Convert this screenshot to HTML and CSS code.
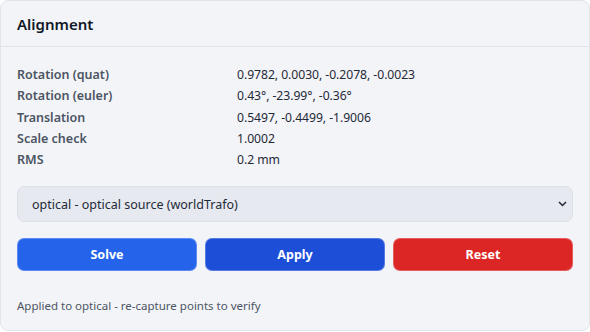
FILE: index.html
```html
<!DOCTYPE html>
<html lang="en">
<head>
    <meta charset="UTF-8">
    <title>Alignment</title>
    <link rel="stylesheet" href="styles.css">
</head>
<body>

<div class="card">
    <div class="card-head">Alignment</div>

    <div class="card-body">
        <div class="info">
            <span class="label">Rotation (quat)</span><span class="value">0.9782, 0.0030, -0.2078, -0.0023</span>
            <span class="label">Rotation (euler)</span><span class="value">0.43°, -23.99°, -0.36°</span>
            <span class="label">Translation</span><span class="value">0.5497, -0.4499, -1.9006</span>
            <span class="label">Scale check</span><span class="value">1.0002</span>
            <span class="label">RMS</span><span class="value">0.2 mm</span>
        </div>

        <div class="select">
            <span>optical - optical source (worldTrafo)</span>
            <svg width="9" height="6" viewBox="0 0 9 6"><path d="M1 1l3.5 3.5L8 1" fill="none" stroke="#1f2937" stroke-width="1.5"/></svg>
        </div>

        <div class="actions">
            <button class="btn btn-solve">Solve</button>
            <button class="btn btn-apply">Apply</button>
            <button class="btn btn-reset">Reset</button>
        </div>

        <p class="status">Applied to optical - re-capture points to verify</p>
    </div>
</div>

</body>
</html>
```

FILE: styles.css
```css
* { margin: 0; padding: 0; box-sizing: border-box; }
body { font-family: "Noto Sans", "Open Sans", sans-serif; background: #fff; }

.card { width: 590px; height: 331px; border: 1px solid #e1e4ea; border-radius: 8px; background: #f3f4f8; }
.card-head { height: 46px; padding: 0 16px; display: flex; align-items: center; font-size: 15px; font-weight: 600; color: #111827; border-bottom: 1px solid #e1e4ea; }
.card-body { padding: 17px 16px 0; }

/**** info rows ****/
.info { display: grid; grid-template-columns: 220px 1fr; font-size: 12.5px; line-height: 21.3px; }
.info .label { color: #4b5563; font-weight: 600; }
.info .value { color: #1f2937; font-size: 12.2px; letter-spacing: -0.05px; }

/**** select ****/
.select { margin-top: 16px; height: 36px; border: 1px solid #dde1e8; border-radius: 7px; background: #e6e9f0; display: flex; align-items: center; justify-content: space-between; padding: 0 5px 0 14px; font-size: 12.5px; color: #1f2937; }

/**** buttons ****/
.actions { margin-top: 16px; display: grid; grid-template-columns: repeat(3, 1fr); gap: 8px; }
.btn { height: 33px; border: 1px solid rgba(255,255,255,.25); border-radius: 7px; color: #fff; font-family: inherit; font-size: 12.5px; font-weight: 700; cursor: pointer; }
.btn-solve { background: #2563eb; }
.btn-apply { background: #1d4ed8; }
.btn-reset { background: #dc2626; }

.status { margin-top: 27px; font-size: 11.5px; color: #4b5563; }
```
